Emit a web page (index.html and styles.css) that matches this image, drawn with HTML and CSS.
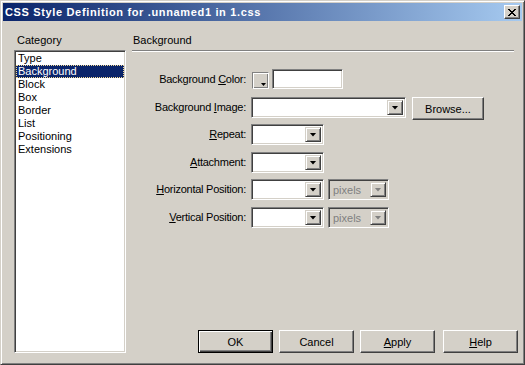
FILE: index.html
```html
<!DOCTYPE html>
<html lang="en">
  <head>
    <meta charset="UTF-8" />
    <title>CSS Style Definition for .unnamed1 in 1.css</title>
    <link rel="stylesheet" href="styles.css">
  </head>
  <body>
    <div class="window">
      <div class="titlebar">
        <span class="title">CSS Style Definition for .unnamed1 in 1.css</span>
        <button class="close" type="button">
          <svg width="8" height="7" viewBox="0 0 8 7" shape-rendering="crispEdges">
            <path fill="#000" d="M0 0h2v1H0z M6 0h2v1H6z M1 1h2v1H1z M5 1h2v1H5z M2 2h4v1H2z M3 3h2v1H3z M2 4h4v1H2z M1 5h2v1H1z M5 5h2v1H5z M0 6h2v1H0z M6 6h2v1H6z" />
          </svg>
        </button>
      </div>

      <div class="dialog">
        <div class="category">
          <div class="caption">Category</div>
          <ul class="listbox">
            <li>Type</li>
            <li class="selected">Background</li>
            <li>Block</li>
            <li>Box</li>
            <li>Border</li>
            <li>List</li>
            <li>Positioning</li>
            <li>Extensions</li>
          </ul>
        </div>

        <div class="panel">
          <div class="caption heading">Background</div>
          <div class="rule"></div>

          <div class="form">
            <label>Background <u>C</u>olor:</label>
            <div class="controls">
              <span class="swatch"></span>
              <span class="field color-field"></span>
            </div>

            <label>Background <u>I</u>mage:</label>
            <div class="controls">
              <span class="field combo wide"><span class="arrow"></span></span>
              <button class="btn browse" type="button">Browse...</button>
            </div>

            <label><u>R</u>epeat:</label>
            <div class="controls">
              <span class="field combo"><span class="arrow"></span></span>
            </div>

            <label><u>A</u>ttachment:</label>
            <div class="controls">
              <span class="field combo"><span class="arrow"></span></span>
            </div>

            <label><u>H</u>orizontal Position:</label>
            <div class="controls">
              <span class="field combo"><span class="arrow"></span></span>
              <span class="field combo unit disabled"><span class="value">pixels</span><span class="arrow"></span></span>
            </div>

            <label><u>V</u>ertical Position:</label>
            <div class="controls">
              <span class="field combo"><span class="arrow"></span></span>
              <span class="field combo unit disabled"><span class="value">pixels</span><span class="arrow"></span></span>
            </div>
          </div>

          <div class="buttons">
            <button class="btn default" type="button">OK</button>
            <button class="btn" type="button">Cancel</button>
            <button class="btn" type="button"><u>A</u>pply</button>
            <button class="btn help" type="button"><u>H</u>elp</button>
          </div>
        </div>
      </div>
    </div>
  </body>
</html>
```

FILE: styles.css
```css
* {
  margin: 0;
  padding: 0;
  box-sizing: border-box;
}
body {
  background: #d4d0c8;
  font-family: "Liberation Sans", Arial, sans-serif;
  font-size: 11px;
  color: #000;
}
.window {
  width: 525px;
  height: 365px;
  display: flex;
  flex-direction: column;
  padding: 2px;
  border: 1px solid;
  border-color: #d4d0c8 #404040 #404040 #d4d0c8;
  box-shadow: inset 1px 1px #fff, inset -1px -1px #808080;
}
.titlebar {
  height: 18px;
  display: flex;
  align-items: center;
  justify-content: space-between;
  padding: 0 2px;
  background: linear-gradient(to right, #0a246a, #a6caf0);
  color: #fff;
  font-weight: bold;
}
.title {
  letter-spacing: 0.65px;
}
.close {
  width: 16px;
  height: 14px;
  display: flex;
  align-items: center;
  justify-content: center;
  background: #d4d0c8;
  border: 1px solid;
  border-color: #fff #404040 #404040 #fff;
  box-shadow: inset -1px -1px #808080;
}
.dialog {
  flex: 1;
  display: flex;
  gap: 6px;
  padding: 13px 4px 9px 11px;
}
.category {
  width: 112px;
  display: flex;
  flex-direction: column;
}
.caption {
  height: 13px;
  line-height: 13px;
  padding-left: 3px;
  margin-bottom: 3px;
}
.listbox {
  flex: 1;
  list-style: none;
  padding: 1px;
  background: #fff;
  border: 1px solid;
  border-color: #808080 #fff #fff #808080;
  box-shadow: inset 1px 1px #404040, inset -1px -1px #d4d0c8;
}
.listbox li {
  height: 13px;
  line-height: 13px;
  padding-left: 2px;
}
.listbox li.selected {
  background: #0a246a;
  color: #fff;
  outline: 1px dotted #f5db95;
  outline-offset: -1px;
}
.panel {
  flex: 1;
  display: flex;
  flex-direction: column;
}
.heading {
  padding-left: 1px;
}
.rule {
  height: 2px;
  margin-right: 4px;
  border-top: 1px solid #808080;
  border-bottom: 1px solid #fff;
}
.form {
  margin-top: 17px;
  display: grid;
  grid-template-columns: 114px auto;
  grid-template-rows: 28px 27px 28px 27px 28px 21px;
  column-gap: 5px;
  align-items: start;
}
.form label {
  text-align: right;
  line-height: 20px;
  white-space: nowrap;
  letter-spacing: -0.25px;
}
.controls {
  display: flex;
  align-items: flex-start;
  gap: 4px;
}
.field {
  height: 21px;
  background: #fff;
  border: 1px solid;
  border-color: #808080 #fff #fff #808080;
  box-shadow: inset 1px 1px #404040, inset -1px -1px #d4d0c8;
}
.swatch {
  width: 17px;
  height: 17px;
  margin: 3px 0 0 1px;
  position: relative;
  border: 1px solid;
  border-color: #808080 #fff #fff #808080;
  box-shadow: inset 1px 1px #fff, inset -1px -1px #808080;
}
.swatch::after {
  content: "";
  position: absolute;
  right: 2px;
  bottom: 2px;
  width: 5px;
  height: 3px;
  background: #000;
  clip-path: polygon(0 0, 100% 0, 50% 100%);
}
.color-field {
  width: 71px;
  height: 20px;
  margin-left: -1px;
}
.combo {
  width: 73px;
  display: flex;
  align-items: stretch;
  padding: 2px;
}
.combo.wide {
  width: 155px;
}
.combo.unit {
  width: 61px;
}
.combo .value {
  flex: 1;
  line-height: 17px;
  padding-left: 2px;
}
.arrow {
  width: 16px;
  margin-left: auto;
  position: relative;
  display: flex;
  align-items: center;
  justify-content: center;
  background: #d4d0c8;
  border: 1px solid;
  border-color: #d4d0c8 #404040 #404040 #d4d0c8;
  box-shadow: inset 1px 1px #fff, inset -1px -1px #808080;
}
.arrow::after {
  content: "";
  width: 7px;
  height: 4px;
  background: #000;
  clip-path: polygon(0 0, 100% 0, 50% 100%);
}
.disabled {
  background: #d4d0c8;
  color: #808080;
}
.disabled .arrow::after {
  background: #808080;
}
.btn {
  width: 75px;
  height: 23px;
  font: inherit;
  color: #000;
  background: #d4d0c8;
  border: 1px solid;
  border-color: #fff #404040 #404040 #fff;
  box-shadow: inset -1px -1px #808080;
}
.btn.default {
  border-color: #000;
  box-shadow: inset 1px 1px #fff, inset -1px -1px #404040, inset -2px -2px #808080;
}
.browse {
  width: 72px;
  margin-left: 2px;
}
.buttons {
  margin-top: auto;
  display: flex;
  justify-content: flex-end;
  gap: 6px;
}
.help {
  margin-left: 2px;
}
```
